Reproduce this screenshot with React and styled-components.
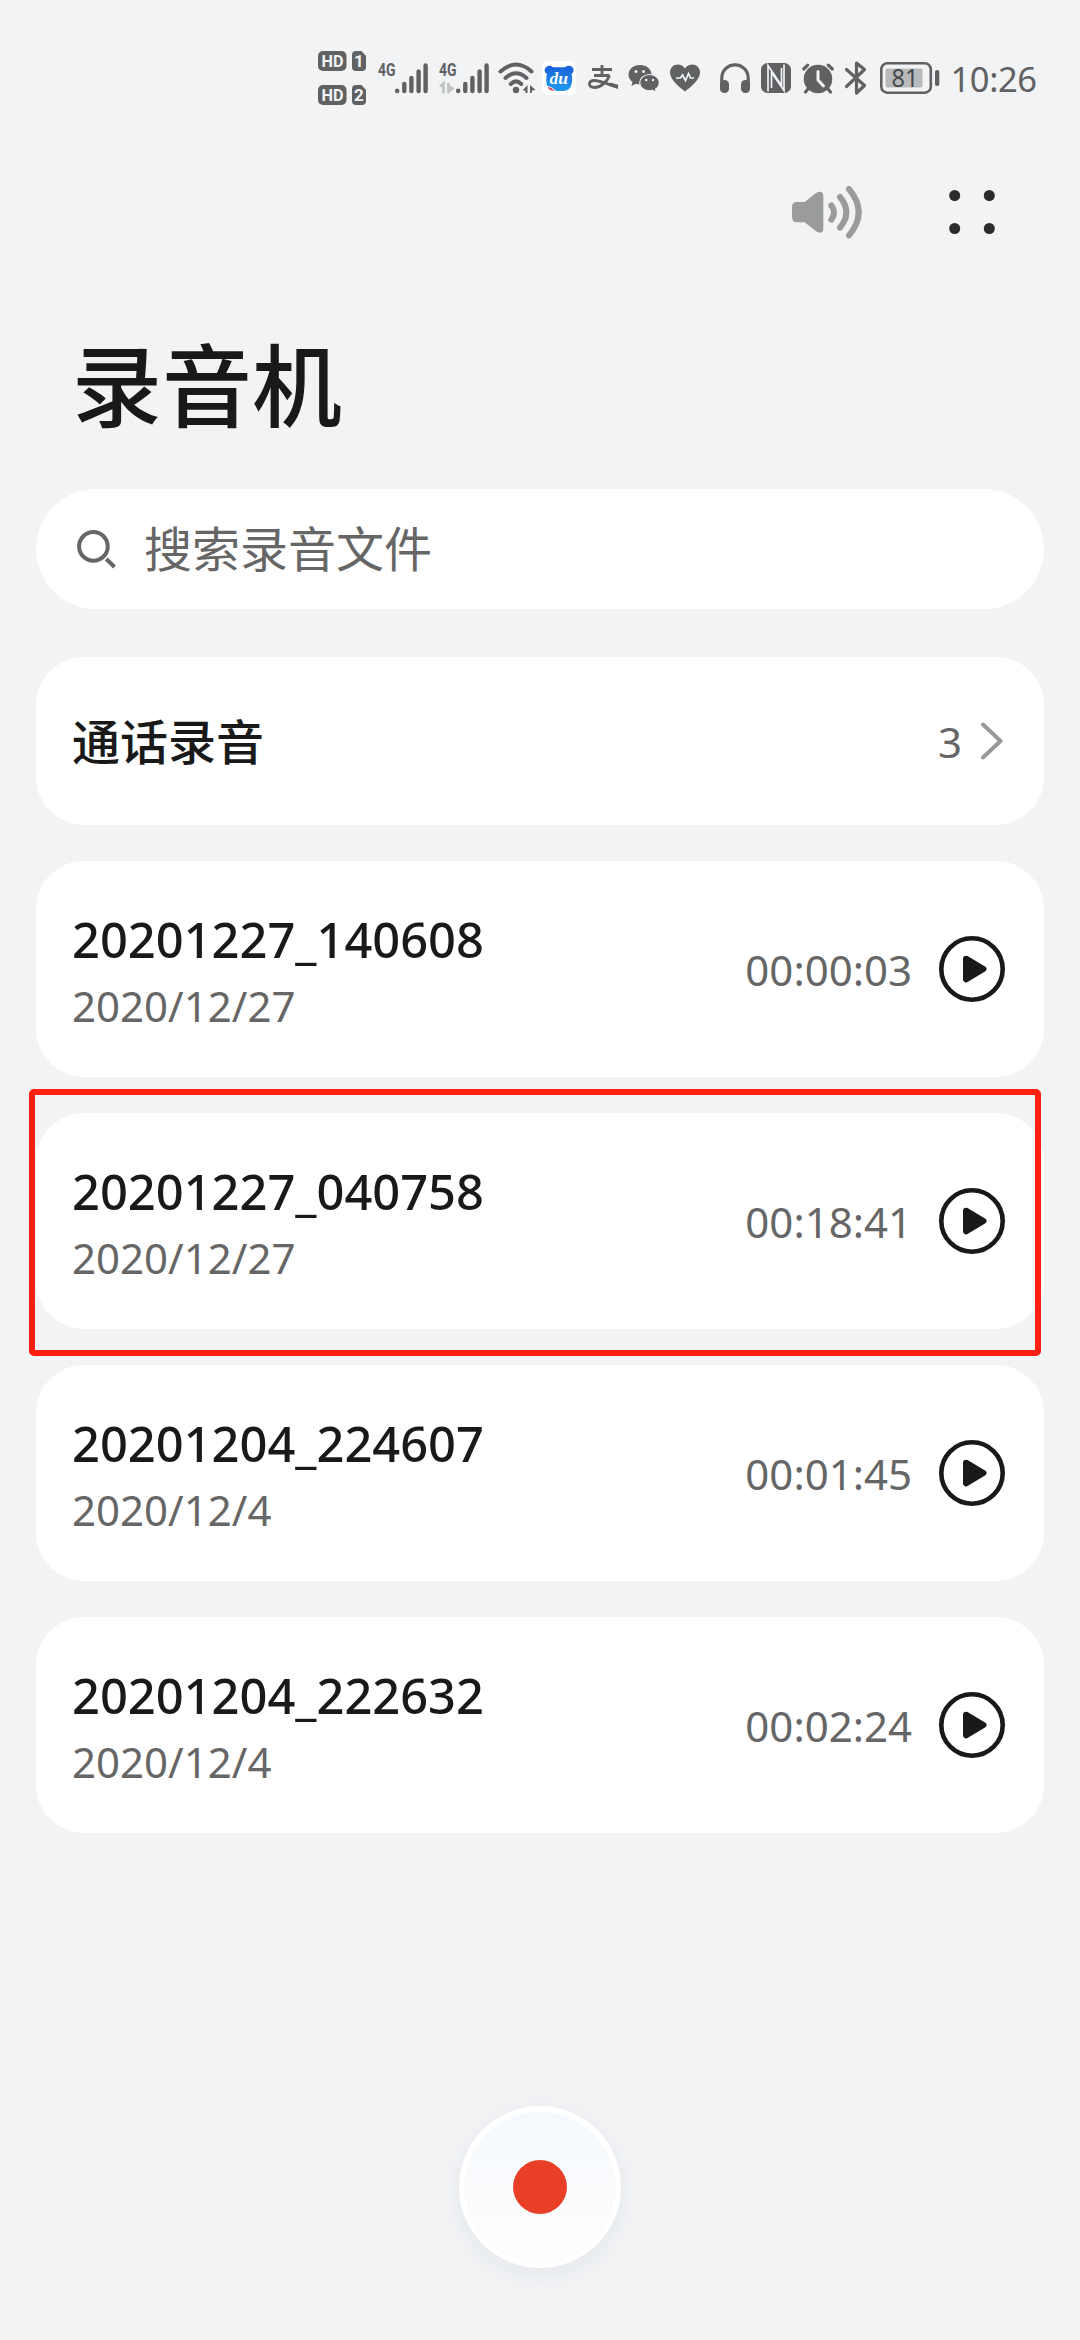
import styled, { createGlobalStyle } from "styled-components";

const ink = "#191919";
const gray = "#666666";
const statusGray = "#5f6163";
const pageBg = "#f1f3f5";

const GlobalStyle = createGlobalStyle`
  * {
    box-sizing: border-box;
  }
  body {
    margin: 0;
    background: ${pageBg};
    font-family: "Noto Sans", "Noto Sans CJK SC", sans-serif;
  }
`;

const Page = styled.div`
  width: 1080px;
  height: 2340px;
  background: ${pageBg};
  display: flex;
  flex-direction: column;
  overflow: hidden;
`;

const StatusBar = styled.div`
  height: 156px;
  padding-left: 318px;
  display: flex;
  align-items: center;
  color: ${statusGray};
  svg {
    display: block;
    flex: none;
    overflow: visible;
  }
`;

const StatusItem = styled.div`
  flex: none;
  margin-left: ${(props) => props.$gap || 0}px;
`;

const HdColumn = styled.div`
  display: flex;
  flex-direction: column;
  gap: 14px;
`;

const Clock = styled.div`
  margin-left: 10.5px;
  padding-top: 2px;
  font-size: 34.5px;
  line-height: 48px;
  letter-spacing: -0.4px;
  white-space: nowrap;
`;

const Toolbar = styled.div`
  height: 112px;
  padding: 0 85px 0 792px;
  display: flex;
  align-items: center;
  justify-content: space-between;
`;

const Title = styled.h1`
  margin: 57px 0 44px 72px;
  font-size: 90px;
  line-height: 120px;
  font-weight: 500;
  color: ${ink};
`;

const SearchBox = styled.div`
  height: 120px;
  margin: 0 36px 48px;
  padding-left: 41px;
  border-radius: 60px;
  background: #fff;
  display: flex;
  align-items: center;
  gap: 28px;
  font-size: 48px;
  line-height: 72px;
  color: ${gray};
`;

const List = styled.div`
  margin: 0 36px;
  display: flex;
  flex-direction: column;
  gap: 36px;
`;

const Card = styled.div`
  position: relative;
  height: ${(props) => props.$height}px;
  padding: 0 39px 0 36px;
  border-radius: 48px;
  background: #fff;
  display: flex;
  align-items: center;
  justify-content: space-between;
`;

const FolderName = styled.div`
  padding-top: 2px;
  font-size: 48px;
  line-height: 66px;
  font-weight: 500;
  color: ${ink};
`;

const FolderCount = styled.div`
  display: flex;
  align-items: center;
  gap: 18px;
  padding-right: 2px;
  font-size: 42px;
  line-height: 60px;
  color: ${gray};
`;

const CountValue = styled.span`
  padding-top: 2px;
`;

const RecordInfo = styled.div`
  padding-top: 6px;
`;

const RecordName = styled.div`
  font-size: 48.8px;
  line-height: 66px;
  font-weight: 500;
  color: ${ink};
`;

const RecordDate = styled.div`
  padding-top: 1px;
  font-size: 42px;
  line-height: 66px;
  color: ${gray};
`;

const RecordSide = styled.div`
  display: flex;
  align-items: center;
  gap: 27px;
`;

const Duration = styled.div`
  padding-top: 2px;
  font-size: 42px;
  line-height: 60px;
  color: ${gray};
`;

// red frame laid over the marked recording
const Highlight = styled.div`
  position: absolute;
  top: -24px;
  left: -7px;
  right: 3px;
  bottom: -27px;
  border: 6.5px solid #ff2011;
  border-radius: 5px;
`;

const RecordButton = styled.button`
  width: 162px;
  height: 162px;
  margin: 273px auto 0;
  padding: 0;
  border: 6px solid #fff;
  border-radius: 50%;
  background: linear-gradient(#f5fafe, #fafbfd 50%, #fdfeff);
  background-clip: padding-box;
  box-shadow: 0 6px 24px rgba(40, 50, 80, 0.06);
  display: flex;
  align-items: center;
  justify-content: center;
`;

const RecordDot = styled.span`
  width: 54px;
  height: 54px;
  border-radius: 50%;
  background: #e83f26;
`;

const records = [
  { name: "20201227_140608", date: "2020/12/27", duration: "00:00:03" },
  { name: "20201227_040758", date: "2020/12/27", duration: "00:18:41", marked: true },
  { name: "20201204_224607", date: "2020/12/4", duration: "00:01:45" },
  { name: "20201204_222632", date: "2020/12/4", duration: "00:02:24" },
];

function HdBadge({ sim }) {
  return (
    <svg width="49" height="20" viewBox="0 0 49 20">
      <rect width="28.5" height="20" rx="5" fill={statusGray} />
      <path d="M38.5 0h5l4.5 5v11a4 4 0 0 1-4 4h-6a4 4 0 0 1-4-4V4a4 4 0 0 1 4-4z" fill={statusGray} />
      <text x="3.500" y="16" fontSize="17" fontWeight="700" fontFamily="Roboto, sans-serif" fill={pageBg} textLength="22" lengthAdjust="spacingAndGlyphs">HD</text>
      <text x="41" y="16" fontSize="17" fontWeight="700" fontFamily="Roboto, sans-serif" fill={pageBg} textAnchor="middle">{sim}</text>
    </svg>
  );
}

function SignalIcon({ faded }) {
  return (
    <svg width="50" height="32" viewBox="0 0 50 32">
      <text x="0" y="14" fontSize="19" fontWeight="700" fontFamily="Roboto, sans-serif" fill={statusGray} textLength="17.5" lengthAdjust="spacingAndGlyphs">4G</text>
      {faded && (
        <path d="M1 24.500l3.500-3v10M9.500 21v10.500M9.500 24l4 2.500-4 3" fill="none" stroke="#c0c2c4" strokeWidth="2.600" />
      )}
      <g stroke={statusGray} strokeWidth="4.400" strokeLinecap="round">
        <path d="M19.200 28.600v.4M26.300 22v7M33.400 16v13M40.600 9.500v19.500M47.600 3.500v25.500" />
      </g>
    </svg>
  );
}

function WifiIcon() {
  return (
    <svg width="38" height="32" viewBox="0 0 38 32">
      <g fill="none" stroke={statusGray} strokeWidth="4" strokeLinecap="round">
        <path d="M2.500 9.500Q18 -4.500 33.500 9.500" />
        <path d="M7.500 16Q18 6.500 28.500 16" />
        <path d="M12.800 22Q18 16.800 23.200 22" />
      </g>
      <circle cx="18" cy="28" r="3.200" fill={statusGray} />
      <path d="M24.500 28.500l5-5.500v8h-2v-2.500zM32 23l5.500 5-3.500.500-.200 2.500H32z" fill={statusGray} />
    </svg>
  );
}

function DuIcon() {
  return (
    <svg width="34" height="34" viewBox="0 0 34 34">
      <defs>
        <linearGradient id="bear" x1="0" y1="0" x2="0" y2="1">
          <stop offset="0" stopColor="#1a5fd8" />
          <stop offset="1" stopColor="#1e9cf0" />
        </linearGradient>
      </defs>
      <rect width="34" height="34" rx="6" fill="#fff" />
      <path d="M6 5c2-.8 4 0 5 1.300h12C24.500 5 27 4.200 29.500 5.500c3 2 2.500 6 0 7.500 1 3 1 8-.5 12-1.500 4-5 5-9 5h-6c-5 0-8-2-9-6-1-3-1-8 0-11C1.500 11 2 6.500 6 5z" fill="url(#bear)" />
      <text x="7.500" y="23" fontSize="17" fontWeight="700" fontStyle="italic" fontFamily="Liberation Serif, serif" fill="#fff" textLength="18.500" lengthAdjust="spacingAndGlyphs">du</text>
      <path d="M5 25.500c3 0 6 1.500 8.500 4.500h-4c-2-.5-3.500-2-4.500-4.500z" fill="#d8475b" stroke="#fff" strokeWidth="1" />
    </svg>
  );
}

function PayIcon() {
  return (
    <svg width="32" height="26" viewBox="0 0 32 26">
      <g fill="none" stroke={statusGray} strokeWidth="2.800">
        <path d="M5 4.500h20M15 0v10.500M7 10.500h15.500" />
        <path d="M22.500 10.500C20 17 14 22.500 7.500 22.500c-7 0-6.500-7 0-7C14 15.500 21 20 31 21.500" />
      </g>
      <path d="M23 17.500l8 2.200v4.300l-9-3z" fill={statusGray} />
    </svg>
  );
}

function ChatIcon() {
  return (
    <svg width="32" height="28" viewBox="0 0 32 28">
      <path d="M12 1C5.400 1 .5 5.200.5 10.600c0 3 1.600 5.600 4 7.400l-1 4 4.300-2.300c1.300.4 2.700.6 4.200.6 6.600 0 11.500-4.200 11.500-9.700S18.600 1 12 1z" fill={statusGray} />
      <path d="M21.500 10.500c-5.500 0-9.800 3.600-9.800 8.200s4.300 8.200 9.800 8.200c1.200 0 2.400-.2 3.400-.5l3.600 1.900-.9-3.200c2.300-1.500 3.700-3.800 3.700-6.400 0-4.600-4.300-8.200-9.800-8.200z" fill={statusGray} stroke={pageBg} strokeWidth="1.200" />
      <g fill={pageBg}>
        <circle cx="8" cy="7.500" r="1.500" />
        <circle cx="15.500" cy="7.500" r="1.500" />
        <circle cx="18.300" cy="16" r="1.200" />
        <circle cx="25" cy="16" r="1.200" />
      </g>
    </svg>
  );
}

function HeartIcon() {
  return (
    <svg width="30" height="28" viewBox="0 0 30 28">
      <path d="M15 27.500C10 23.500 0 16 0 8.500 0 4 3.500.5 7.700.5c3 0 5.700 1.500 7.300 4C16.600 2 19.300.5 22.300.5 26.500.5 30 4 30 8.500c0 7.500-10 15-15 19z" fill={statusGray} />
      <path d="M6 14h4.500l2-3 3 5.500 3-7 2 4.500H24" fill="none" stroke={pageBg} strokeWidth="1.700" />
    </svg>
  );
}

function HeadphoneIcon() {
  return (
    <svg width="30" height="30" viewBox="0 0 30 30">
      <path d="M1.800 23V15a13.200 13.200 0 0 1 26.400 0v8" fill="none" stroke={statusGray} strokeWidth="3.200" />
      <rect x="0" y="17" width="9" height="13" rx="4.300" fill={statusGray} />
      <rect x="21" y="17" width="9" height="13" rx="4.300" fill={statusGray} />
    </svg>
  );
}

function NfcIcon() {
  return (
    <svg width="30" height="30" viewBox="0 0 30 30">
      <rect width="30" height="30" rx="6.500" fill={statusGray} />
      <path d="M7 28.500V2.500l13.500 20V5M23 1.500V27.500L10.500 9.500V25" fill="none" stroke={pageBg} strokeWidth="1.700" />
    </svg>
  );
}

function AlarmIcon() {
  return (
    <svg width="32" height="31" viewBox="0 0 32 31">
      <circle cx="16" cy="16" r="14.300" fill={statusGray} />
      <g stroke={statusGray} strokeWidth="3.200" strokeLinecap="round">
        <path d="M1.700 6l4-3.800M30.300 6l-4-3.800M6 26l-2.500 3M26 26l2.500 3" />
      </g>
      <path d="M16 8.500v8.500l5.500 6" fill="none" stroke={pageBg} strokeWidth="3" strokeLinecap="round" />
    </svg>
  );
}

function BluetoothIcon() {
  return (
    <svg width="22" height="34" viewBox="0 0 22 34">
      <path d="M1.500 8.500l18 16-8 7.500V2l8 6.500-18 17" fill="none" stroke={statusGray} strokeWidth="3.200" strokeLinecap="round" strokeLinejoin="round" />
    </svg>
  );
}

function BatteryIcon() {
  return (
    <svg width="60" height="32" viewBox="0 0 60 32">
      <rect x="1.300" y="1.300" width="49.500" height="29.400" rx="6" fill="none" stroke={statusGray} strokeWidth="2.600" />
      <rect x="5.500" y="6.500" width="37" height="19" rx="2" fill="#b7b9bb" />
      <rect x="55" y="8" width="4.300" height="16" rx="2" fill={statusGray} />
      <text x="11.500" y="25" fontSize="26" fontFamily="Noto Sans, sans-serif" fill="#46484a" textLength="27" lengthAdjust="spacingAndGlyphs">81</text>
    </svg>
  );
}

function SpeakerIcon() {
  return (
    <svg width="70" height="53" viewBox="0 0 210 159">
      <path d="M14 48H38L72 21Q94 10 94 32V126Q94 148 72 136L38 109H14Q0 109 0 94V63Q0 48 14 48z" fill="#9a9b9d" />
      <path d="M118 58Q134 79 118 101M144 33Q182 79 144 125M171 9Q229 79 171 148" fill="none" stroke="#9a9b9d" strokeWidth="18" strokeLinecap="round" />
    </svg>
  );
}

function MenuIcon() {
  return (
    <svg width="46" height="44" viewBox="0 0 46 44" fill="#2a2b2d">
      <circle cx="5.700" cy="5.500" r="5.500" />
      <circle cx="40.300" cy="5.500" r="5.500" />
      <circle cx="5.700" cy="38.500" r="5.500" />
      <circle cx="40.300" cy="38.500" r="5.500" />
    </svg>
  );
}

function SearchIcon() {
  return (
    <svg width="39" height="39" viewBox="0 0 39 39" fill="none" stroke={gray} strokeWidth="4">
      <circle cx="16.400" cy="16.400" r="14.300" />
      <path d="M29.300 29l8.200 8" />
    </svg>
  );
}

function ChevronIcon() {
  return (
    <svg width="23" height="38" viewBox="0 0 23 38">
      <path d="M3 2.500l17.500 16.500L3 35.500" fill="none" stroke="#999" strokeWidth="4" strokeLinecap="round" strokeLinejoin="round" />
    </svg>
  );
}

function PlayIcon() {
  return (
    <svg width="66" height="66" viewBox="0 0 66 66">
      <circle cx="33" cy="33" r="30.700" fill="none" stroke={ink} strokeWidth="4.600" />
      <path d="M27 22.700L44.500 33 27 43.300z" fill={ink} stroke={ink} strokeWidth="6" strokeLinejoin="round" />
    </svg>
  );
}

function RecordCard({ record }) {
  return (
    <Card $height={216}>
      <RecordInfo>
        <RecordName>{record.name}</RecordName>
        <RecordDate>{record.date}</RecordDate>
      </RecordInfo>
      <RecordSide>
        <Duration>{record.duration}</Duration>
        <PlayIcon />
      </RecordSide>
      {record.marked && <Highlight />}
    </Card>
  );
}

export default function App() {
  return (
    <>
      <GlobalStyle />
      <Page>
        <StatusBar>
          <HdColumn>
            <HdBadge sim="1" />
            <HdBadge sim="2" />
          </HdColumn>
          <StatusItem $gap={10.5}><SignalIcon /></StatusItem>
          <StatusItem $gap={11}><SignalIcon faded /></StatusItem>
          <StatusItem $gap={9.5}><WifiIcon /></StatusItem>
          <StatusItem $gap={6}><DuIcon /></StatusItem>
          <StatusItem $gap={11}><PayIcon /></StatusItem>
          <StatusItem $gap={9}><ChatIcon /></StatusItem>
          <StatusItem $gap={10}><HeartIcon /></StatusItem>
          <StatusItem $gap={20}><HeadphoneIcon /></StatusItem>
          <StatusItem $gap={11}><NfcIcon /></StatusItem>
          <StatusItem $gap={11}><AlarmIcon /></StatusItem>
          <StatusItem $gap={11}><BluetoothIcon /></StatusItem>
          <StatusItem $gap={13}><BatteryIcon /></StatusItem>
          <Clock>10:26</Clock>
        </StatusBar>
        <Toolbar>
          <SpeakerIcon />
          <MenuIcon />
        </Toolbar>
        <Title>录音机</Title>
        <SearchBox>
          <SearchIcon />
          搜索录音文件
        </SearchBox>
        <List>
          <Card $height={168}>
            <FolderName>通话录音</FolderName>
            <FolderCount>
              <CountValue>3</CountValue>
              <ChevronIcon />
            </FolderCount>
          </Card>
          {records.map((record) => (
            <RecordCard key={record.name} record={record} />
          ))}
        </List>
        <RecordButton>
          <RecordDot />
        </RecordButton>
      </Page>
    </>
  );
}
